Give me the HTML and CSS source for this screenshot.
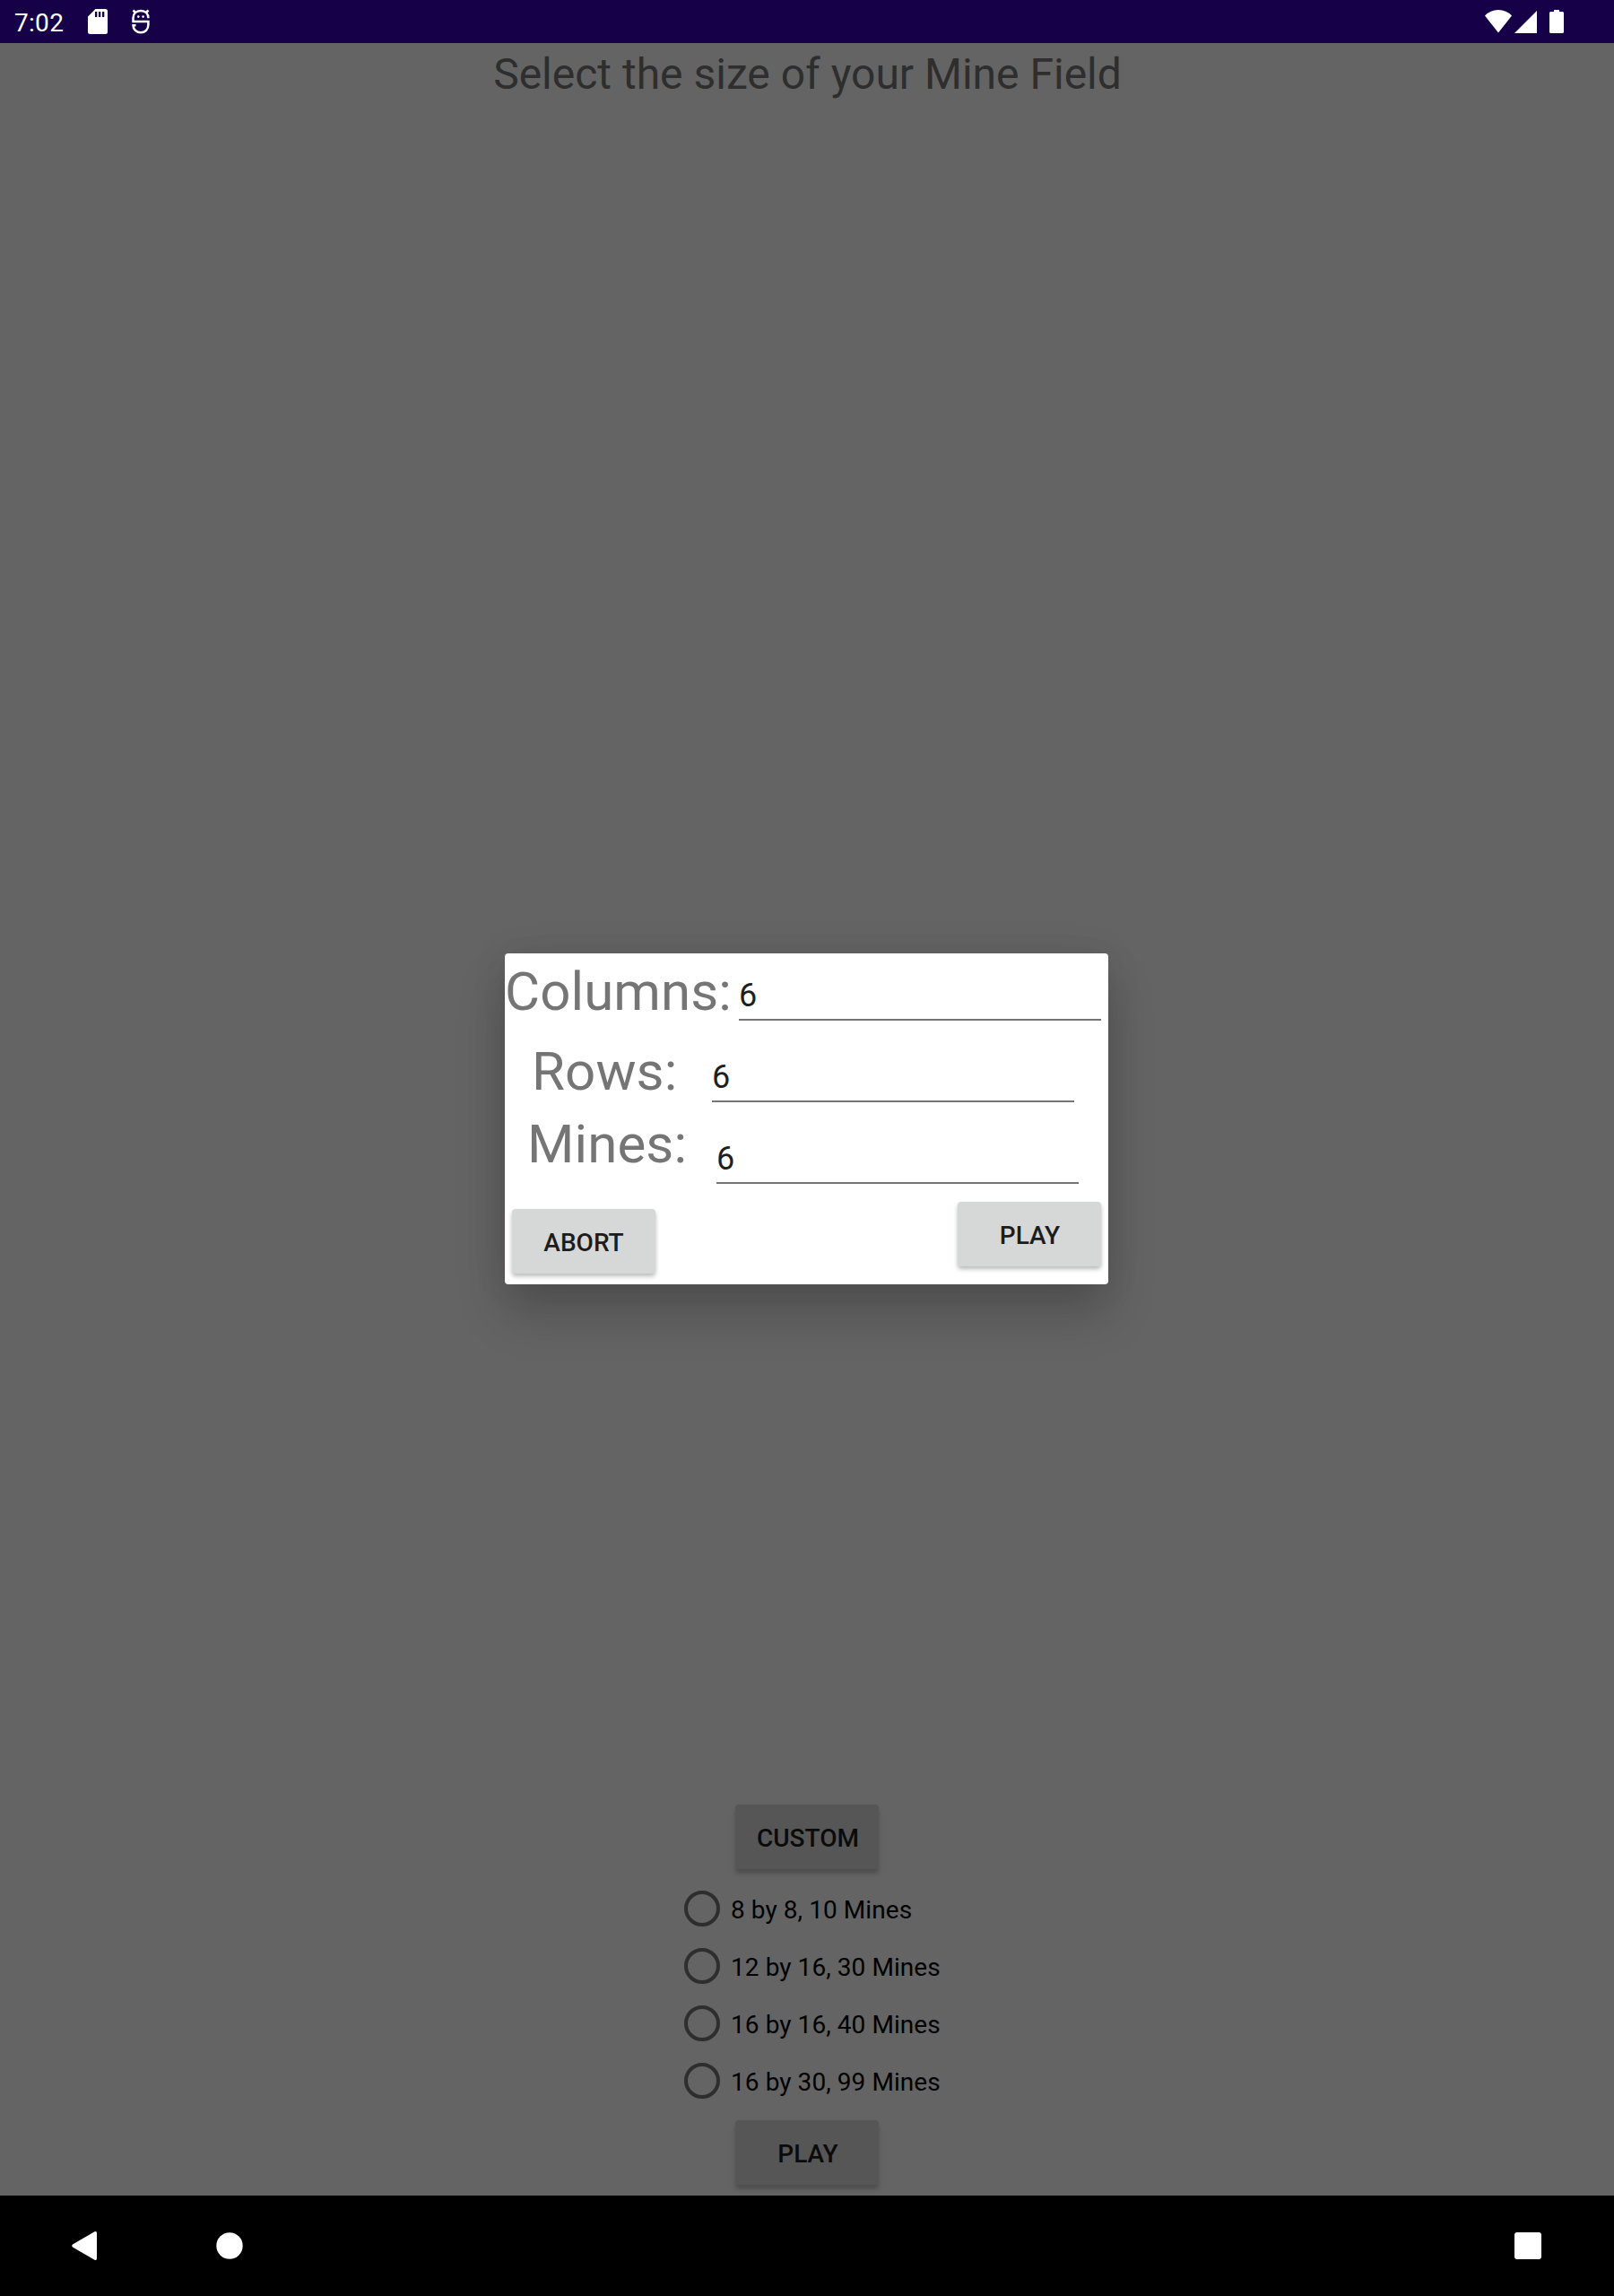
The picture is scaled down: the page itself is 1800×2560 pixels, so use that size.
FILE: index.html
```
<!DOCTYPE html>
<html lang="en">
<head>
<meta charset="utf-8">
<title>Mine Field</title>
<link rel="stylesheet" href="styles.css">
</head>
<body>
<header class="status">
  <span class="clock">7:02</span>
  <svg class="sd" width="22" height="28" viewBox="0 0 22 28"><path fill="#fff" fill-rule="evenodd" d="M8.500 0H19.500Q22 0 22 2.500V25.500Q22 28 19.500 28H2.500Q0 28 0 25.500V8.500ZM8 3V9H10.300V3ZM12 3V9H14.300V3ZM16 3V9H18.300V3Z"/></svg>
  <svg class="bug" width="20" height="28" viewBox="0 0 20 28" fill="none" stroke="#fff" stroke-width="2.500"><path d="M1.500 1.500L4.500 4.500M18.500 1.500L15.500 4.500M18.400 10.300C18.400 5.500 15.500 2 10 2S1.500 5.500 1.500 10V14H18.400V17.500C18.400 22.500 15 26.300 10 26.300S1.500 22.500 1.500 18.200H4.500"/><circle cx="7.300" cy="8.600" r="1.300" fill="#fff" stroke="none"/><circle cx="12.600" cy="8.600" r="1.300" fill="#fff" stroke="none"/></svg>
  <span class="spacer"></span>
  <svg class="wifi" width="30" height="26" viewBox="0 0 30 26"><path fill="#fff" d="M0 6.500Q6 0 15 0T30 6.500L15 25.500Z"/></svg>
  <svg class="signal" width="25" height="25" viewBox="0 0 25 25"><path fill="#fff" d="M25 0V25H0Z"/></svg>
  <svg class="battery" width="16" height="26" viewBox="0 0 16 26"><path fill="#fff" d="M5 0H11V2H14.500Q16 2 16 3.500V24.500Q16 26 14.500 26H1.500Q0 26 0 24.500V3.500Q0 2 1.500 2H5Z"/></svg>
</header>

<main class="screen">
  <h1 class="title">Select the size of your Mine Field</h1>

  <section class="menu">
    <button class="btn dim">CUSTOM</button>
    <div class="options">
      <label class="option"><span class="radio"></span>8 by 8, 10 Mines</label>
      <label class="option"><span class="radio"></span>12 by 16, 30 Mines</label>
      <label class="option"><span class="radio"></span>16 by 16, 40 Mines</label>
      <label class="option"><span class="radio"></span>16 by 30, 99 Mines</label>
    </div>
    <button class="btn dim">PLAY</button>
  </section>

  <div class="overlay">
    <section class="dialog">
      <div class="row columns"><label class="label">Columns:</label><span class="field">6</span></div>
      <div class="row rows"><label class="label">Rows:</label><span class="field">6</span></div>
      <div class="row mines"><label class="label">Mines:</label><span class="field">6</span></div>
      <div class="actions"><button class="btn abort">ABORT</button><button class="btn">PLAY</button></div>
    </section>
  </div>
</main>

<footer class="nav">
  <svg class="back" width="28" height="32" viewBox="0 0 28 32"><path fill="#fff" d="M25.500 .3Q28-.6 28 2V30Q28 32.600 25.500 31.700L1 17.500Q-.8 16 1 14.500Z"/></svg>
  <svg class="home" width="30" height="30" viewBox="0 0 30 30"><circle cx="15" cy="15" r="14.700" fill="#fff"/></svg>
  <span class="spacer"></span>
  <span class="recents"></span>
</footer>
</body>
</html>
```
FILE: styles.css
```
* { box-sizing: border-box; }

body {
  margin: 0;
  width: 1800px;
  height: 2560px;
  display: flex;
  flex-direction: column;
  overflow: hidden;
  font-family: Roboto, sans-serif;
  background: #646464;
}

.spacer { flex: 1; }
svg { display: block; flex: none; overflow: visible; }

.status {
  height: 48px;
  flex: none;
  display: flex;
  align-items: flex-start;
  background: #160048;
  color: #fff;
  padding: 0 56px 0 16px;
}
.clock { width: 82px; font-size: 28px; line-height: 51px; letter-spacing: .3px; }
.sd { margin-top: 10px; }
.bug { margin: 10px 0 0 27px; }
.wifi { margin-top: 11px; }
.signal { margin: 12px 0 0 3px; }
.battery { margin: 11px 0 0 14px; }

.screen {
  position: relative;
  flex: 1;
  display: flex;
  flex-direction: column;
  align-items: center;
  justify-content: space-between;
}
.title {
  margin: 0;
  padding-left: 1px;
  font-size: 48px;
  font-weight: 400;
  line-height: 70px;
  color: #2e2e2e;
  height: 64px;
}

/* dialog layer, centred over the screen */
.overlay {
  position: absolute;
  inset: 0;
  display: flex;
  align-items: center;
  justify-content: center;
  padding: 0 1px 1px 0;
}
.dialog {
  width: 673px;
  height: 369px;
  background: #fff;
  border-radius: 4px;
  box-shadow: 0 32px 54px rgba(0, 0, 0, .2), 0 0 40px rgba(0, 0, 0, .08);
}
.row { display: flex; height: 91px; }
.label {
  flex: 1;
  font-size: 60px;
  letter-spacing: .1px;
  color: #757575;
  white-space: nowrap;
}
.columns .label { line-height: 86px; }
.rows { padding: 0 30px; }
.rows .label { line-height: 82px; }
.mines { padding: 0 25px; }
.mines .label { line-height: 62px; }
.field {
  flex: none;
  width: 404px;
  height: 75px;
  margin: 0 8px;
  border-bottom: 2px solid #757575;
  font-size: 36px;
  line-height: 94px;
  color: #1f1f1f;
}
.actions {
  display: flex;
  justify-content: space-between;
  padding: 4px 8px 0;
}

.btn {
  width: 160px;
  height: 72px;
  padding: 3px 0 0 1px;
  border: 0;
  border-radius: 4px;
  background: #d6d7d7;
  color: #1c1c1c;
  font: 500 28px/69px Roboto, sans-serif;
  text-align: center;
  box-shadow: 0 3px 5px rgba(0, 0, 0, .28);
}
.abort { margin-top: 8px; padding-left: 0; }
.dim {
  padding-left: 2px;
  background: #565656;
  color: #0b0b0b;
  box-shadow: 0 5px 5px rgba(0, 0, 0, .22);
}

.menu {
  height: 436px;
  display: flex;
  flex-direction: column;
  align-items: center;
}
.options {
  width: 296px;
  padding: 12px 0;
}
.option {
  display: flex;
  height: 64px;
  font-size: 28px;
  line-height: 67px;
  letter-spacing: .07px;
  color: #000;
  white-space: nowrap;
  padding-left: 11px;
}
.radio {
  flex: none;
  width: 40px;
  height: 40px;
  margin: 12px 12px 0 0;
  border: 4px solid #2e2e2e;
  border-radius: 50%;
}

.nav {
  height: 112px;
  flex: none;
  display: flex;
  align-items: center;
  background: #000;
  padding: 0 81px 0 80px;
}
.home { margin-left: 133px; }
.recents { width: 30px; height: 30px; border-radius: 3px; background: #fff; }
```
